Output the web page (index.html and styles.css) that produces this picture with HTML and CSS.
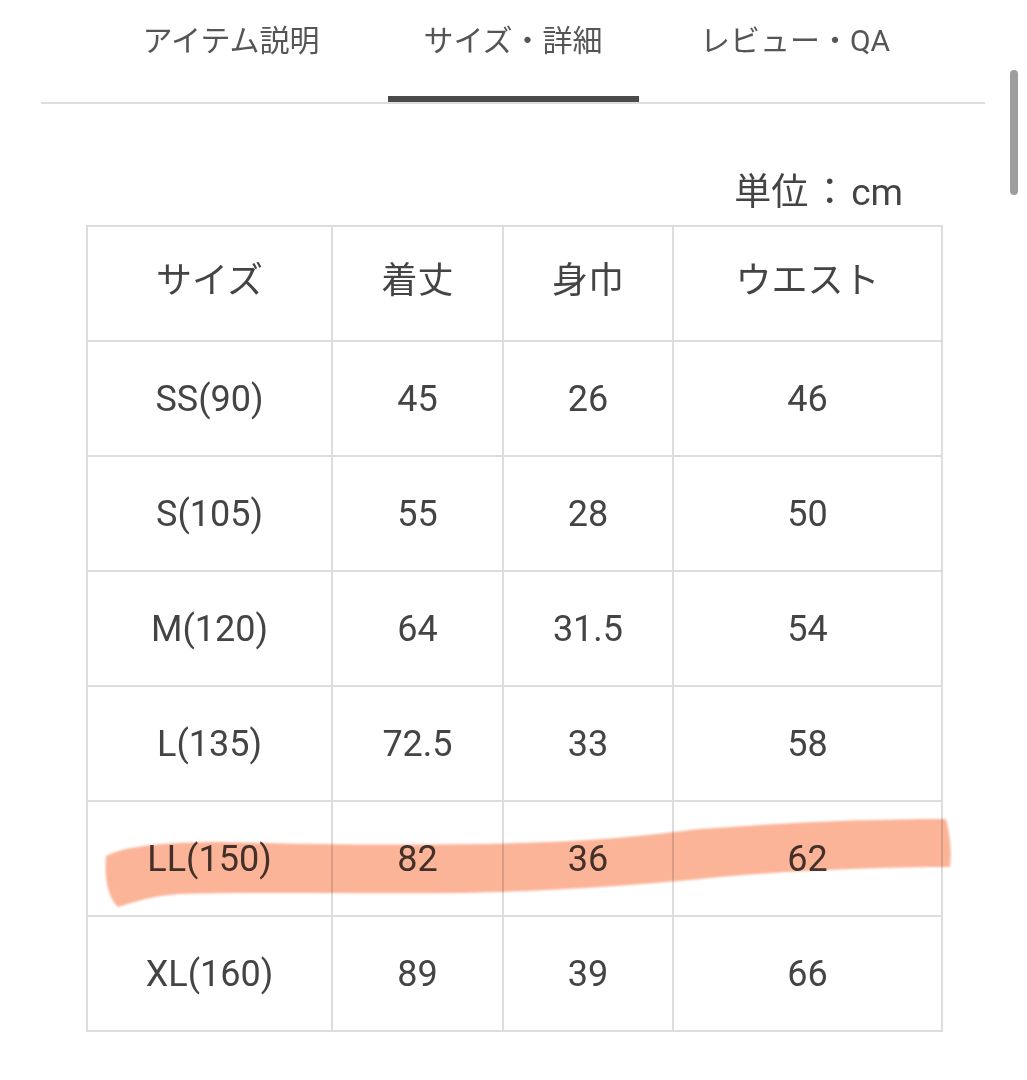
FILE: index.html
```html
<!DOCTYPE html>
<html lang="ja">
<head>
<meta charset="utf-8">
<title>サイズ・詳細</title>
<link rel="stylesheet" href="styles.css">
</head>
<body>
<nav class="tabs">
  <div class="tab">アイテム説明</div>
  <div class="tab active">サイズ・詳細</div>
  <div class="tab">レビュー・QA</div>
</nav>
<main class="content">
  <div class="unit">単位<span class="colon">：</span>cm</div>
  <table class="size-table">
    <colgroup>
      <col class="c1"><col class="c2"><col class="c3"><col class="c4">
    </colgroup>
    <tr class="head"><td>サイズ</td><td>着丈</td><td>身巾</td><td>ウエスト</td></tr>
    <tr><td>SS(90)</td><td>45</td><td>26</td><td>46</td></tr>
    <tr><td>S(105)</td><td>55</td><td>28</td><td>50</td></tr>
    <tr><td>M(120)</td><td>64</td><td>31.5</td><td>54</td></tr>
    <tr><td>L(135)</td><td>72.5</td><td>33</td><td>58</td></tr>
    <tr><td>LL(150)</td><td>82</td><td>36</td><td>62</td></tr>
    <tr><td>XL(160)</td><td>89</td><td>39</td><td>66</td></tr>
  </table>
</main>
<div class="scrollbar"></div>
<svg class="marker" width="1027" height="1080" viewBox="0 0 1027 1080">
  <path d="M106,856 C 125,846 165,842 220,842 C 300,844 400,846 520,843 C 600,841 650,835 700,829 C 780,823 860,819 946,819 C 950,835 952,850 950,867 C 880,867 800,870 720,877 C 640,885 560,891 460,893 C 360,894 260,892 180,894 C 150,896 132,903 118,907 C 108,898 104,878 106,856 Z"/>
</svg>
</body>
</html>
```

FILE: styles.css
```css
html, body {
  margin: 0;
  padding: 0;
  background: #ffffff;
}
body {
  width: 1027px;
  height: 1080px;
  position: relative;
  overflow: hidden;
  font-family: Roboto, "Noto Sans CJK JP", sans-serif;
  color: #444444;
}
.tabs {
  margin: 0 42px 0 41px;
  height: 102px;
  border-bottom: 2px solid #dddddd;
  display: flex;
  justify-content: center;
}
.tab {
  width: 282px;
  padding-top: 21px;
  line-height: 40px;
  font-size: 30px;
  text-align: center;
  color: #555555;
  position: relative;
}
.tab.active::after {
  content: "";
  position: absolute;
  left: 50%;
  bottom: 0;
  width: 251px;
  height: 6px;
  margin-left: -125px;
  background: #4a4a4a;
}
.content {
  margin-left: 86px;
  width: 857px;
}
.unit {
  margin-top: 65px;
  height: 56px;
  line-height: 48px;
  font-size: 37px;
  text-align: right;
  padding-right: 40px;
  color: #444444;
}
.colon {
  margin: 0 3px;
}
.size-table {
  border-collapse: separate;
  border-spacing: 2px;
  background: #dddddd;
  table-layout: fixed;
  width: 857px;
}
.c1 { width: 243px; }
.c2 { width: 169px; }
.c3 { width: 168px; }
.c4 { width: 267px; }
.size-table td {
  background: #ffffff;
  height: 113px;
  padding: 0;
  text-align: center;
  vertical-align: middle;
  font-size: 36px;
  color: #444444;
}
.size-table .head td {
  padding-bottom: 14px;
  height: 99px;
}
.scrollbar {
  position: absolute;
  left: 1010px;
  top: 70px;
  width: 8px;
  height: 125px;
  border-radius: 4px;
  background: #9e9e9e;
}
.marker {
  position: absolute;
  left: 0;
  top: 0;
  mix-blend-mode: multiply;
  filter: blur(1.2px);
}
.marker path {
  fill: #fbb498;
}
```
